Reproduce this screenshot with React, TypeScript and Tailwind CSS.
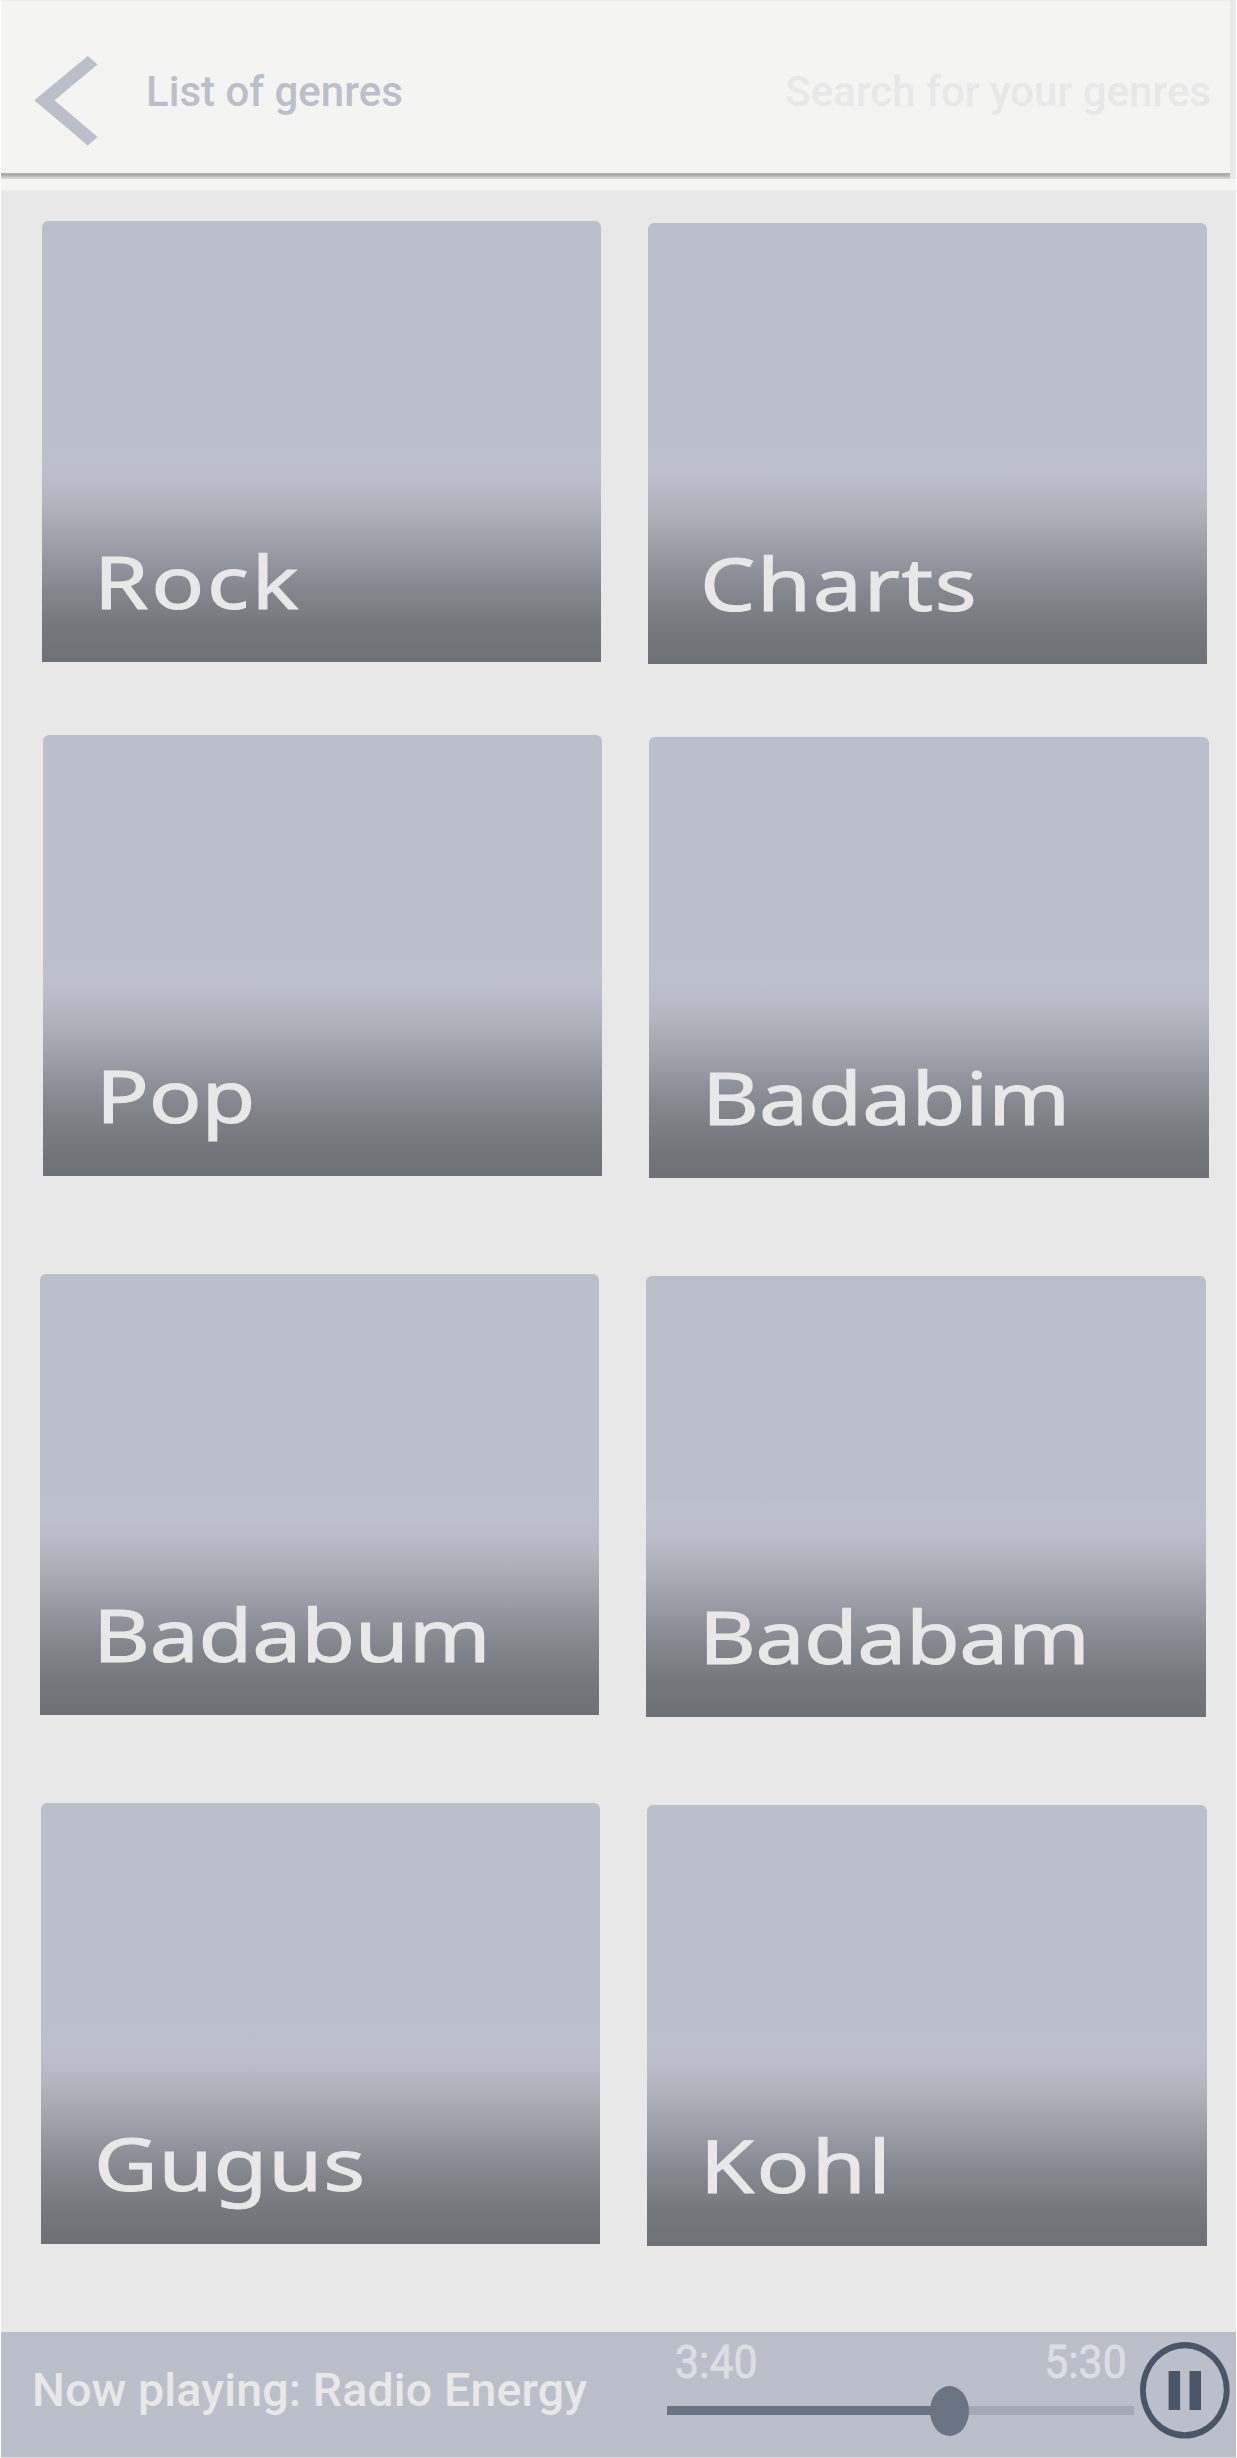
type Genre = { name: string; tracking: string };

const rows: { className: string; genres: [Genre, Genre] }[] = [
  {
    className: "mt-[30px] pl-[40.5px]",
    genres: [
      { name: "Rock", tracking: "tracking-[2.3px]" },
      { name: "Charts", tracking: "tracking-[1.4px]" },
    ],
  },
  {
    className: "mt-[71px] pl-[42px]",
    genres: [
      { name: "Pop", tracking: "tracking-[-0.2px]" },
      { name: "Badabim", tracking: "tracking-[0.1px]" },
    ],
  },
  {
    className: "mt-[96px] pl-[39px]",
    genres: [
      { name: "Badabum", tracking: "tracking-[-0.2px]" },
      { name: "Badabam", tracking: "tracking-[-0.45px]" },
    ],
  },
  {
    className: "mt-[86px] pl-[40px]",
    genres: [
      { name: "Gugus", tracking: "tracking-[0.7px]" },
      { name: "Kohl", tracking: "tracking-[1.9px]" },
    ],
  },
];

function GenreCard({ genre, offset }: { genre: Genre; offset: boolean }) {
  return (
    <button
      type="button"
      className={`flex h-[441px] w-[559.3px] shrink-0 items-end rounded-t-[6px] bg-[linear-gradient(#bbbfca_50%,#bdc1cc_55%,#bbbcc9_59%,#b2b4be_64%,#a0a3ac_72%,#91949c_78%,#83868d_84%,#75787f_92%,#6d7077_100%)] pb-[45px] pl-[52.5px] ${offset ? "mt-[2px]" : ""}`}
    >
      <span
        className={`origin-left scale-x-120 font-['Noto_Sans',sans-serif] text-[73px] leading-[73px] text-[#e8e8e8] [-webkit-text-stroke:1px_#e8e8e8] ${genre.tracking}`}
      >
        {genre.name}
      </span>
    </button>
  );
}

function Header() {
  return (
    <header className="h-[190px] bg-[#f4f4f2]">
      <div className="h-[179px] bg-[#e8e8e8] pr-[6px]">
        <div className="flex h-[173px] items-start border-t border-[#efefed] bg-[#f4f4f2] pr-[19px] pl-[33px]">
          <svg className="mt-[55px] h-[90px] w-[64px]" viewBox="0 0 64 90" aria-label="Back">
            <path d="M53.8 0 63.5 8.5 20.5 44.3 63.5 81 53.8 89.5 0.3 44.3Z" fill="#bbbfca" />
          </svg>
          <h1 className="mt-[66px] ml-[48px] text-[42px] leading-[49px] font-medium text-[#bbbfca]">
            List of genres
          </h1>
          <span className="mt-[66px] ml-auto text-[42px] leading-[49px] font-medium text-[#e8e8e8]">
            Search for your genres
          </span>
        </div>
        <div className="h-[6px] bg-[linear-gradient(#b4b6b2,#a8aaa5_25%,#b8b9b6_50%,#e2e2e1)]" />
      </div>
    </header>
  );
}

function Player() {
  return (
    <footer className="flex h-[125px] items-start bg-[#bbbfca] text-[#e8e8e8]">
      <p className="mt-[31px] w-[634px] pl-[31px] text-[46.5px] leading-[54px] font-medium tracking-[0.15px] whitespace-nowrap">
        Now playing: Radio Energy
      </p>
      <div className="ml-[32px] w-[467px] pt-[3px]">
        <div className="flex justify-between pr-[7px] pl-[8px] text-[46px] leading-[54px] text-[#dddee2] [-webkit-text-stroke:0.8px_#dddee2]">
          <span className="origin-left scale-x-[0.93]">3:40</span>
          <span className="origin-right scale-x-[0.93]">5:30</span>
        </div>
        <div className="relative mt-[17px] h-[9px] bg-[#a6a9b5]">
          <div className="h-full w-[283px] bg-[#6b7483]" />
          <div className="absolute top-[-20px] left-[263px] h-[50px] w-[39px] rounded-[50%] bg-[#6b7483]" />
        </div>
      </div>
      <svg className="mt-[10px] ml-[6px] h-[97px] w-[90px]" viewBox="0 0 90 97" aria-label="Pause">
        <path
          fillRule="evenodd"
          fill="#4a5565"
          d="M0 48.3a44.8 48.3 0 1 0 89.6 0a44.8 48.3 0 1 0-89.6 0ZM5.8 48.3a39 42 0 1 0 78 0a39 42 0 1 0-78 0Z"
        />
        <path fill="#4a5565" d="M28.6 29h11.5v39H28.6ZM49.5 29H61v39H49.5Z" />
      </svg>
    </footer>
  );
}

export default function App() {
  return (
    <div className="h-[2458px] w-[1237px] overflow-hidden bg-white px-px font-['Roboto',sans-serif]">
      <div className="flex h-full flex-col bg-[#e8e8e8]">
        <Header />
        <main className="h-[2142px] border-t border-[#ededec]">
          {rows.map((row) => (
            <div key={row.genres[0].name} className={`flex items-start gap-[47px] ${row.className}`}>
              {row.genres.map((genre, i) => (
                <GenreCard key={genre.name} genre={genre} offset={i === 1} />
              ))}
            </div>
          ))}
        </main>
        <Player />
        <div className="h-px bg-[#dddfe4]" />
      </div>
    </div>
  );
}
